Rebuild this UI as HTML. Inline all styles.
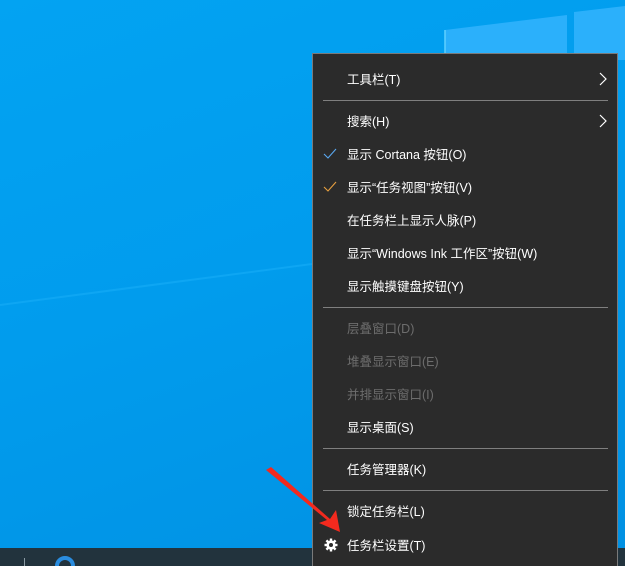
<!DOCTYPE html>
<html style="width:625px;height:566px;overflow:hidden"><head><meta charset="utf-8"><style>
*{margin:0;padding:0;box-sizing:border-box}
body{width:625px;height:566px;overflow:hidden;position:relative;background:linear-gradient(160deg,#03a3f2 0%,#019ced 45%,#0190e2 100%);font-family:"Liberation Sans","Noto Sans CJK SC",sans-serif}
#bg{position:absolute;left:0;top:0}
.tb{position:absolute;left:0;top:548px;width:625px;height:18px;background:#22333d}
.menu{position:absolute;left:312px;top:53px;width:306px;height:513px;background:#2b2b2b;border:1px solid #7a7a7a;border-bottom:none}
.it{position:absolute;left:34px;color:#fff;font-size:12.5px;line-height:16px;white-space:nowrap}
.dis{color:#6d6d6d}
.sep{position:absolute;left:10px;width:285px;height:1px;background:#7f7f7f}
.chev{position:absolute;right:10px}
</style></head><body>
<svg id="bg" width="625" height="566">
<polygon points="445,30 567,15 567,60 445,60" fill="#2bb0fb"/>
<polygon points="574,12 625,6 625,60 574,60" fill="#2bb0fb"/>
<line x1="445" y1="30" x2="445" y2="60" stroke="#5fd0ff" stroke-width="1.5"/>
<line x1="0" y1="305" x2="312" y2="264" stroke="#0ea6f3" stroke-width="2"/>
</svg>
<div class="tb"></div>
<svg style="position:absolute;left:55px;top:556px" width="20" height="10"><path d="M2 10 A8 8 0 0 1 18 10" fill="none" stroke="#2a8de0" stroke-width="4"/></svg>
<div style="position:absolute;left:24px;top:558px;width:1px;height:8px;background:#8a9aa3"></div>
<div class="menu">
<div class="it" style="top:18px">工具栏(T)</div>
<svg class="chev" style="top:18px" width="8" height="14"><path d="M1 1 L7 7 L1 13" fill="none" stroke="#fff" stroke-width="1.2"/></svg>
<div class="sep" style="top:46px"></div>
<div class="it" style="top:60px">搜索(H)</div>
<svg class="chev" style="top:60px" width="8" height="14"><path d="M1 1 L7 7 L1 13" fill="none" stroke="#fff" stroke-width="1.2"/></svg>
<svg style="position:absolute;left:10px;top:94px" width="14" height="12"><path d="M1 6 L5 10 L13 1" fill="none" stroke="#5aa8f0" stroke-width="1.1"/></svg>
<div class="it" style="top:93px">显示 Cortana 按钮(O)</div>
<svg style="position:absolute;left:10px;top:127px" width="14" height="12"><path d="M1 6 L5 10 L13 1" fill="none" stroke="#e8a040" stroke-width="1.1"/></svg>
<div class="it" style="top:126px">显示“任务视图”按钮(V)</div>
<div class="it" style="top:159px">在任务栏上显示人脉(P)</div>
<div class="it" style="top:192px">显示“Windows Ink 工作区”按钮(W)</div>
<div class="it" style="top:225px">显示触摸键盘按钮(Y)</div>
<div class="sep" style="top:253px"></div>
<div class="it dis" style="top:267px">层叠窗口(D)</div>
<div class="it dis" style="top:300px">堆叠显示窗口(E)</div>
<div class="it dis" style="top:333px">并排显示窗口(I)</div>
<div class="it" style="top:366px">显示桌面(S)</div>
<div class="sep" style="top:394px"></div>
<div class="it" style="top:408px">任务管理器(K)</div>
<div class="sep" style="top:436px"></div>
<div class="it" style="top:450px">锁定任务栏(L)</div>
<svg style="position:absolute;left:11px;top:484px" width="14" height="14" viewBox="0 0 14 14"><g fill="#fff"><circle cx="7" cy="7" r="4.6"/><rect x="5.8" y="0.5" width="2.4" height="13"/><rect x="0.5" y="5.8" width="13" height="2.4"/><rect x="5.8" y="0.5" width="2.4" height="13" transform="rotate(45 7 7)"/><rect x="5.8" y="0.5" width="2.4" height="13" transform="rotate(-45 7 7)"/></g><circle cx="7" cy="7" r="2" fill="#2b2b2b"/></svg>
<div class="it" style="top:484px">任务栏设置(T)</div>
</div>
<svg style="position:absolute;left:0;top:0" width="625" height="566"><polygon points="266,470 271,467 330,519 336,510 340,532 319,523 327,520" fill="#f32a1e"/></svg>
</body></html>
